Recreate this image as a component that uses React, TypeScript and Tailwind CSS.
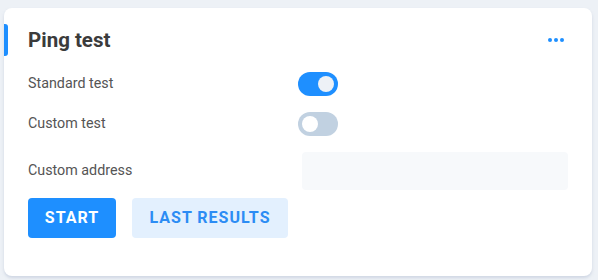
import React from "react";

export default function App() {
  return (
    <div className="w-[598px] h-[280px] bg-[#edf1f6] pt-2 pl-1" style={{ fontFamily: "Roboto, 'Noto Sans', sans-serif" }}>
      <div className="w-[588px] h-[268px] bg-white rounded-lg shadow-[0_2px_3px_rgba(180,190,210,0.5)] pt-4">
        <div className="relative h-8 flex items-center justify-between pl-6 pr-7">
          <div className="absolute left-0 top-0 h-8 w-1 bg-[#1e8fff] rounded-r-[3px]" />
          <h1 className="text-[20.5px] font-bold text-[#3b3b3b] leading-none">Ping test</h1>
          <div className="flex gap-[2px]">
            <span className="w-1 h-1 rounded-full bg-[#1e8fff]" />
            <span className="w-1 h-1 rounded-full bg-[#1e8fff]" />
            <span className="w-1 h-1 rounded-full bg-[#1e8fff]" />
          </div>
        </div>
        <div className="px-6 mt-4 flex flex-col">
          <div className="h-6 flex items-center">
            <span className="w-[270px] text-[14.3px] text-[#555]">Standard test</span>
            <div className="w-10 h-6 rounded-full bg-[#1e8fff] flex items-center justify-end pr-1">
              <span className="w-4 h-4 rounded-full bg-[#edf1f6]" />
            </div>
          </div>
          <div className="h-6 mt-4 flex items-center">
            <span className="w-[270px] text-[14.3px] text-[#555]">Custom test</span>
            <div className="w-10 h-6 rounded-full bg-[#c1d1e1] flex items-center pl-1">
              <span className="w-4 h-4 rounded-full bg-white" />
            </div>
          </div>
          <div className="h-[38px] mt-4 flex items-center">
            <span className="w-[274px] text-[14.3px] text-[#555]">Custom address</span>
            <div className="flex-1 h-[38px] rounded bg-[#f7f9fb]" />
          </div>
          <div className="mt-2 flex gap-4">
            <button className="w-[88px] h-10 rounded bg-[#1e8fff] text-white text-[16px] font-bold tracking-[1px]">START</button>
            <button className="w-[156px] h-10 rounded bg-[#e3f0fe] text-[#2c8cf4] text-[16px] font-bold tracking-[1px]">LAST RESULTS</button>
          </div>
        </div>
      </div>
    </div>
  );
}
